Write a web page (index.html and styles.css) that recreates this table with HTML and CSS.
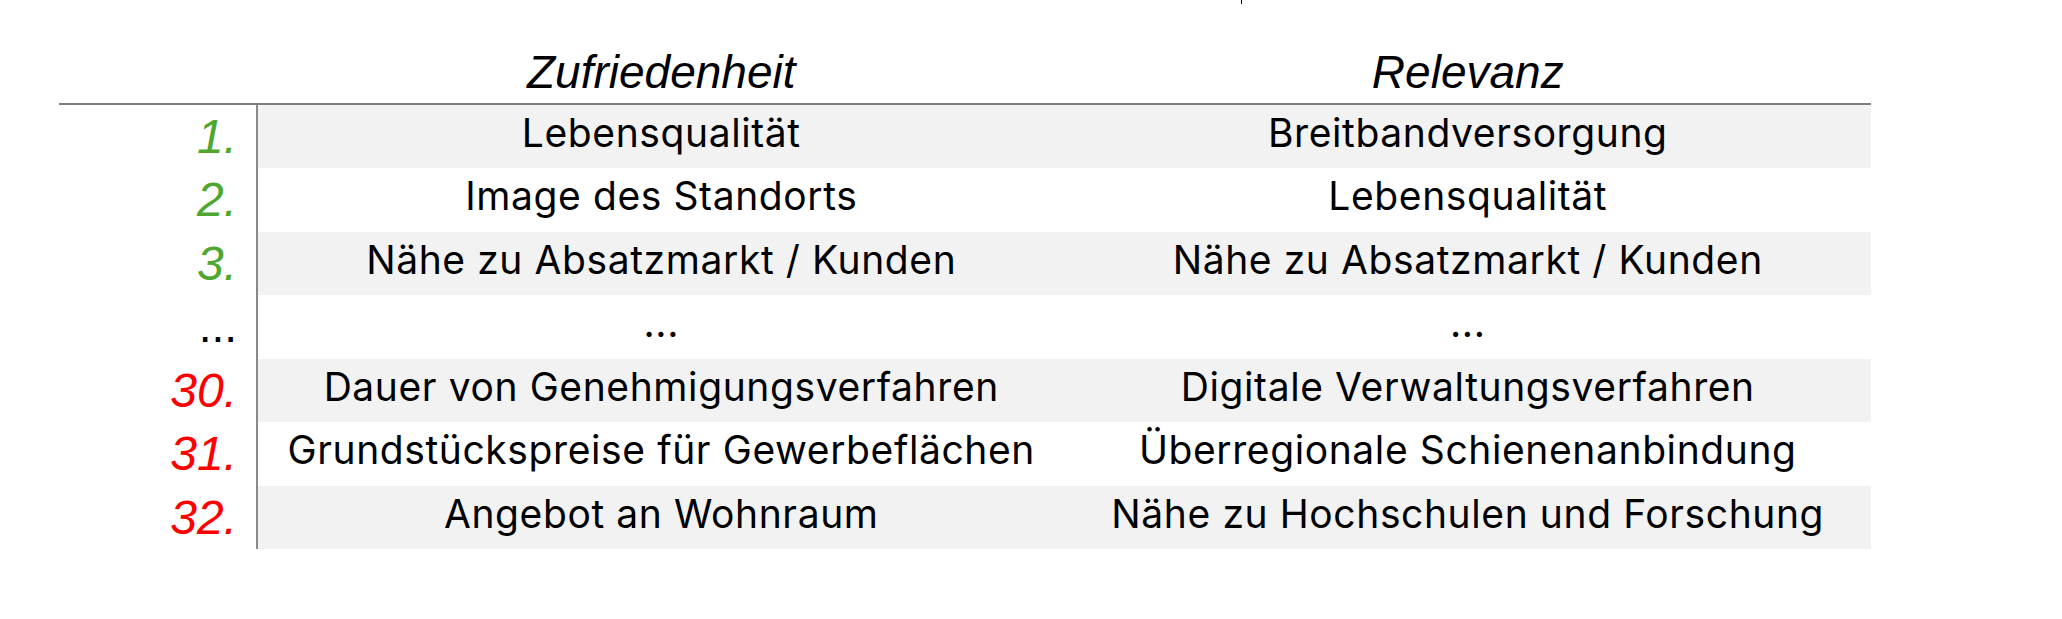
FILE: index.html
```html
<!DOCTYPE html>
<html lang="de">
<head>
<meta charset="utf-8">
<title>Standortfaktoren</title>
<link rel="stylesheet" href="styles.css">
</head>
<body>
<div class="page">
  <span class="tick"></span>
  <div class="table">
    <div class="hcell num-h"></div>
    <div class="hcell">Zufriedenheit</div>
    <div class="hcell">Relevanz</div>

    <div class="num good">1.</div>
    <div class="cell shade">Lebensqualität</div>
    <div class="cell shade">Breitbandversorgung</div>

    <div class="num good">2.</div>
    <div class="cell">Image des Standorts</div>
    <div class="cell">Lebensqualität</div>

    <div class="num good">3.</div>
    <div class="cell shade">Nähe zu Absatzmarkt / Kunden</div>
    <div class="cell shade">Nähe zu Absatzmarkt / Kunden</div>

    <div class="num dots">...</div>
    <div class="cell">...</div>
    <div class="cell">...</div>

    <div class="num bad">30.</div>
    <div class="cell shade">Dauer von Genehmigungsverfahren</div>
    <div class="cell shade">Digitale Verwaltungsverfahren</div>

    <div class="num bad">31.</div>
    <div class="cell">Grundstückspreise für Gewerbeflächen</div>
    <div class="cell">Überregionale Schienenanbindung</div>

    <div class="num bad">32.</div>
    <div class="cell shade">Angebot an Wohnraum</div>
    <div class="cell shade">Nähe zu Hochschulen und Forschung</div>
  </div>
</div>
</body>
</html>
```

FILE: styles.css
```css
* {
  box-sizing: border-box;
}

html, body {
  margin: 0;
  padding: 0;
  background: #ffffff;
}

.page {
  position: relative;
  width: 2062px;
  height: 619px;
  padding-left: 59px;
}

.tick {
  position: absolute;
  left: 1241px;
  top: 0;
  width: 1px;
  height: 4px;
  background: #000;
}

.table {
  display: grid;
  width: 1812px;
  grid-template-columns: 199px 1fr 1fr;
  grid-template-rows: 105px repeat(7, 63.43px);
}

.hcell {
  font-family: "Liberation Sans", Arial, sans-serif;
  font-style: italic;
  font-size: 46px;
  line-height: 62px;
  padding-top: 41px;
  text-align: center;
  color: #000;
  border-bottom: 2px solid #7f7f7f;
  white-space: nowrap;
}

.num {
  font-family: "Liberation Sans", Arial, sans-serif;
  font-style: italic;
  font-size: 48px;
  line-height: 63px;
  text-align: right;
  padding-right: 19px;
  border-right: 2px solid #8a8a8a;
  white-space: nowrap;
}

.good {
  color: #4ea72e;
}

.bad {
  color: #ff0000;
}

.dots {
  color: #000;
  font-style: normal;
  font-size: 46px;
}

.cell {
  font-family: Inter, "Liberation Sans", sans-serif;
  font-size: 39px;
  letter-spacing: 0.6px;
  line-height: 56.5px;
  padding-bottom: 7px;
  text-align: center;
  color: #000;
  white-space: nowrap;
}

.shade {
  background: #f2f2f2;
}
```
